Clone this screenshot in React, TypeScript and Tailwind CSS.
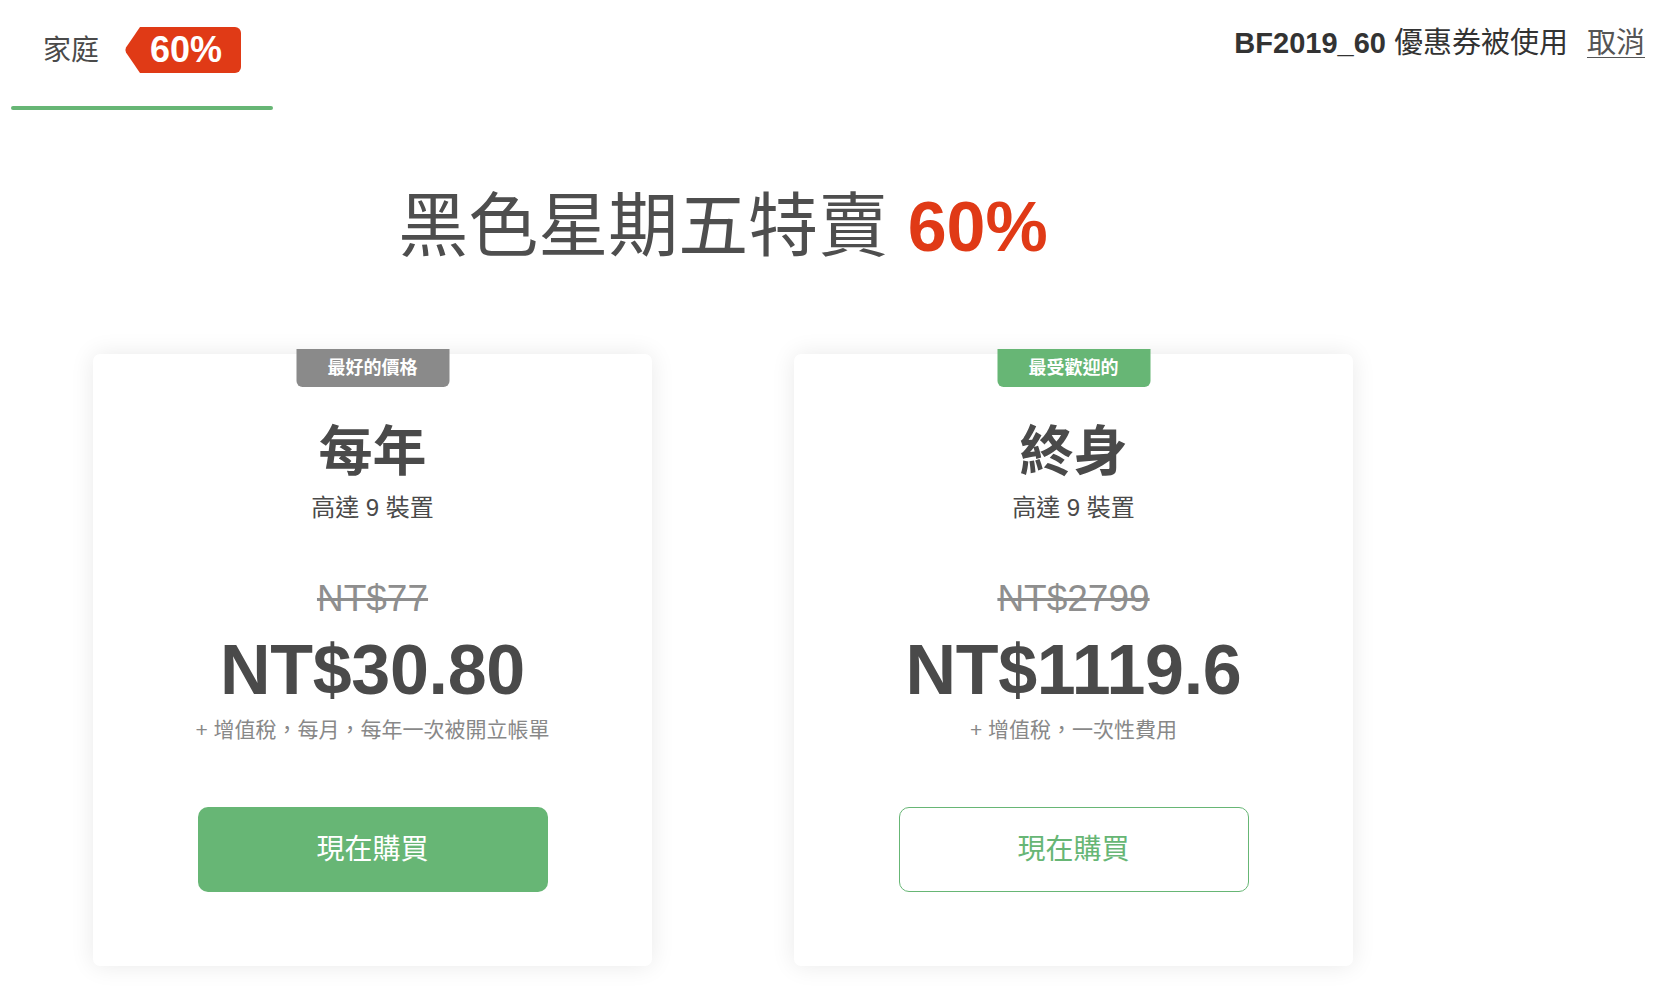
import React from "react";

type Plan = {
  tag: string;
  tagClass: string;
  title: string;
  devices: string;
  oldPrice: string;
  price: string;
  note: string;
  solid: boolean;
};

const plans: Plan[] = [
  {
    tag: "最好的價格",
    tagClass: "bg-[#8a8a8a]",
    title: "每年",
    devices: "高達 9 裝置",
    oldPrice: "NT$77",
    price: "NT$30.80",
    note: "+ 增值稅，每月，每年一次被開立帳單",
    solid: true,
  },
  {
    tag: "最受歡迎的",
    tagClass: "bg-[#67b675]",
    title: "終身",
    devices: "高達 9 裝置",
    oldPrice: "NT$2799",
    price: "NT$1119.6",
    note: "+ 增值稅，一次性費用",
    solid: false,
  },
];

const PlanCard = ({ plan }: { plan: Plan }) => (
  <div className="relative w-[559px] h-[612px] bg-white rounded-[7px] shadow-[0_0_24px_rgba(0,0,0,0.09)] flex flex-col items-center pt-[67px]">
    {/* ribbon on the top edge */}
    <div
      className={`absolute -top-[5px] left-1/2 -translate-x-1/2 w-[153px] h-[38px] rounded-b-[6px] flex items-center justify-center text-white text-[18px] font-bold leading-none ${plan.tagClass}`}
    >
      {plan.tag}
    </div>

    <h2 className="text-[54px] leading-[62px] font-bold text-[#4a4a4a]">{plan.title}</h2>
    <p className="mt-[9px] text-[24px] leading-[32px] text-[#4a4a4a]">{plan.devices}</p>
    <p className="mt-[53px] text-[37px] leading-[44px] text-[#8e8e8e] line-through">{plan.oldPrice}</p>
    <p className="mt-[9px] text-[70px] leading-[80px] font-bold text-[#4a4a4a] tracking-[-0.3px]">{plan.price}</p>
    <p className="mt-[6px] text-[21px] leading-[28px] text-[#888888]">{plan.note}</p>

    {plan.solid ? (
      <button className="mt-[63px] w-[350px] h-[85px] rounded-[10px] bg-[#67b675] text-white text-[28px]">
        現在購買
      </button>
    ) : (
      <button className="mt-[63px] w-[350px] h-[85px] rounded-[10px] border border-[#67b675] bg-white text-[#67b675] text-[28px]">
        現在購買
      </button>
    )}
  </div>
);

export default function App() {
  return (
    <div className="w-[1658px] min-h-[990px] bg-white [font-family:'Liberation_Sans','Noto_Sans_CJK_TC',sans-serif]">
      {/* top bar */}
      <div className="flex justify-between items-start">
        <div className="ml-[11px] w-[262px] flex flex-col">
          <div className="h-[100px] flex items-center pl-8 gap-[25px]">
            <span className="text-[28px] leading-none text-[#4a4a4a] mt-[2px]">家庭</span>
            <div className="flex items-center h-[46px]">
              <svg width="16" height="46" viewBox="0 0 16 46" className="block">
                <path d="M16 0 L16 46 L2 25.5 Q0.8 23 2 20.5 Z" fill="#e03a16" />
              </svg>
              <div className="h-[46px] bg-[#e03a16] rounded-r-[6px] pl-[10px] pr-[19px] flex items-center text-white text-[36px] font-bold leading-none">
                60%
              </div>
            </div>
          </div>
          <div className="mt-[6px] h-[4px] rounded-full bg-[#67b675]" />
        </div>

        <div className="pt-[23px] pr-[13px] flex items-center gap-[19px] text-[29px] leading-[40px]">
          <span className="text-[#333333]">
            <span className="font-bold">BF2019_60</span> 優惠券被使用
          </span>
          <a href="#" className="text-[#555555] underline underline-offset-4 decoration-1">
            取消
          </a>
        </div>
      </div>

      {/* main */}
      <div className="ml-[93px] w-[1260px] flex flex-col items-center">
        <h1 className="mt-[77px] text-[70px] leading-[80px] text-[#4e4e4e] whitespace-nowrap">
          黑色星期五特賣 <span className="font-bold text-[#e03a16]">60%</span>
        </h1>

        <div className="mt-[87px] w-full flex justify-between">
          {plans.map((plan, index) => (
            <PlanCard key={index} plan={plan} />
          ))}
        </div>
      </div>
    </div>
  );
}
